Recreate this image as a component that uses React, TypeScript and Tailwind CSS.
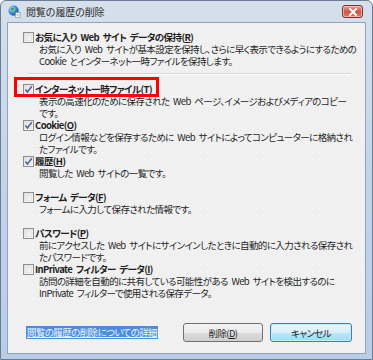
import React from "react";

type Item = {
  label: string;
  key: string;
  lines: string[];
  checked: boolean;
  highlight?: boolean;
};

const items: Item[] = [
  {
    label: "インターネット一時ファイル",
    key: "T",
    lines: ["表示の高速化のために保存された Web ページ、イメージおよびメディアのコピー", "です。"],
    checked: true,
    highlight: true,
  },
  {
    label: "Cookie",
    key: "O",
    lines: ["ログイン情報などを保存するために Web サイトによってコンピューターに格納され", "たファイルです。"],
    checked: true,
  },
  { label: "履歴", key: "H", lines: ["閲覧した Web サイトの一覧です。"], checked: true },
  { label: "フォーム データ", key: "F", lines: ["フォームに入力して保存された情報です。"], checked: false },
  {
    label: "パスワード",
    key: "P",
    lines: ["前にアクセスした Web サイトにサインインしたときに自動的に入力される保存され", "たパスワードです。"],
    checked: false,
  },
  {
    label: "InPrivate フィルター データ",
    key: "I",
    lines: ["訪問の詳細を自動的に共有している可能性がある Web サイトを検出するのに", "InPrivate フィルターで使用される保存データ。"],
    checked: false,
  },
];

function Checkbox({ checked }: { checked: boolean }) {
  return (
    <span className="relative flex h-[11px] w-[11px] shrink-0 items-center justify-center border border-[#8e8f8f] bg-gradient-to-br from-[#dcdcdc] to-[#fbfbfb]">
      <span className="absolute inset-[1px] border border-[#e6e6e6] bg-gradient-to-br from-[#e4e4e4] to-[#f8f8f8]" />
      {checked && (
        <svg viewBox="0 0 9 9" className="relative h-[9px] w-[9px]">
          <path d="M1.5 4.5 L3.5 7 L7.8 1.2" fill="none" stroke="#4a5f97" strokeWidth="1.5" />
        </svg>
      )}
    </span>
  );
}

function Label({ text, k }: { text: string; k: string }) {
  return (
    <span className="font-bold whitespace-nowrap">
      {text}(<span className="underline">{k}</span>)
    </span>
  );
}

function Entry({ item }: { item: Item }) {
  return (
    <div className="h-[36px] pl-[15px]">
      <div className="relative flex h-[12px] items-center gap-[1px]">
        <Checkbox checked={item.checked} />
        <Label text={item.label} k={item.key} />
        {item.highlight && (
          <div className="absolute left-[-9px] top-[-6px] h-[20px] w-[145px] border-[3px] border-[#ff0000]" />
        )}
      </div>
      <div className="pl-[16px] whitespace-nowrap">
        {item.lines.map((l) => (
          <div key={l}>{l}</div>
        ))}
      </div>
    </div>
  );
}

export default function App() {
  return (
    <div className="relative h-[360px] w-[373px] overflow-hidden rounded-t-[6px] border border-[#6b7d96] bg-gradient-to-b from-[#d6e0ec] via-[#c3d4e8] to-[#b9cde6] font-['Noto_Sans_CJK_JP',sans-serif] text-[9.5px] leading-[12px] tracking-[-0.6px] text-[#1e1e1e] [font-feature-settings:'palt'] [word-spacing:2px]">
      {/* Title bar */}
      <div className="flex h-[21px] items-center pl-[7px] pr-[9px]">
        <svg viewBox="0 0 14 14" className="h-[13px] w-[13px]">
          <defs>
            <radialGradient id="g" cx="0.35" cy="0.35" r="0.7">
              <stop offset="0" stopColor="#bfe6ff" />
              <stop offset="0.6" stopColor="#2f86d6" />
              <stop offset="1" stopColor="#17509a" />
            </radialGradient>
          </defs>
          <circle cx="6" cy="6" r="5.5" fill="url(#g)" />
          <path d="M3 3.5 Q5 2 6.5 4 Q5.5 6 3.5 6 Z M7 7 Q9 6.5 9.5 9 Q8 10.5 7 9.5 Z" fill="#3aa33a" />
          <rect x="8" y="8" width="5" height="5.5" fill="#fafafa" stroke="#7a7a7a" strokeWidth="0.6" />
          <path d="M9 10 H12 M9 11.5 H12" stroke="#8a8a8a" strokeWidth="0.5" />
        </svg>
        <span className="ml-[5px] text-[10px] tracking-[-0.2px] text-[#2b2b2b] [font-feature-settings:normal]">閲覧の履歴の削除</span>
        <div className="ml-auto flex h-[13px] w-[21px] items-center justify-center rounded-[3px] border border-[#7e3030] bg-gradient-to-b from-[#e5a398] via-[#c85a4a] to-[#d77a5e] shadow-[inset_0_0_0_1px_rgba(255,220,210,0.6)]">
          <svg viewBox="0 0 10 8" className="h-[8px] w-[10px]">
            <path d="M2 1 L8 7 M8 1 L2 7" stroke="#ffffff" strokeWidth="1.8" strokeLinecap="square" />
          </svg>
        </div>
      </div>

      {/* Client area */}
      <div className="mx-[6px] h-[332px] border border-[#8fa4bf] bg-[#f0f0f0] bg-[radial-gradient(circle,#fbfbfb_0.7px,transparent_1px)] bg-[length:7px_7px] pt-[8px]">
        <div className="h-[36px] pl-[15px]">
          <div className="flex h-[12px] items-center gap-[1px]">
            <Checkbox checked={false} />
            <Label text="お気に入り Web サイト データの保持" k="R" />
          </div>
          <div className="pl-[16px] whitespace-nowrap">
            <div>お気に入り Web サイトが基本設定を保持し、さらに早く表示できるようにするための</div>
            <div>Cookie とインターネット一時ファイルを保持します。</div>
          </div>
        </div>

        <div className="ml-[20px] mr-[14px] mt-[6px] h-[2px] border-t border-b border-t-[#d5d5d5] border-b-[#ffffff]" />

        <div className="mt-[8px]">
          {items.map((it) => (
            <Entry key={it.key} item={it} />
          ))}
        </div>

        <div className="mt-[24px] flex items-center pl-[18px] pr-[13px]">
          <span className="bg-[#4a8ddd] px-[1px] leading-[13px] text-[#eef5ff] underline">
            閲覧の履歴の削除についての詳細
          </span>
          <div className="ml-auto flex gap-[7px]">
            <button className="flex h-[19px] w-[80px] items-center justify-center rounded-[3px] border border-[#707070] bg-[linear-gradient(#f3f3f3,#ebebeb_50%,#dddddd_50%,#cfcfcf)] text-[9.5px] text-[#1e1e1e]">
              削除(<span className="underline">D</span>)
            </button>
            <button className="flex h-[19px] w-[82px] items-center justify-center rounded-[3px] border border-[#3c7fb1] bg-[linear-gradient(#eaf6fd,#d9f0fc_50%,#bee6fd_50%,#a7d9f5)] text-[9.5px] text-[#1e1e1e] shadow-[inset_0_0_0_1px_#c6ecfc]">
              キャンセル
            </button>
          </div>
        </div>
      </div>
    </div>
  );
}
